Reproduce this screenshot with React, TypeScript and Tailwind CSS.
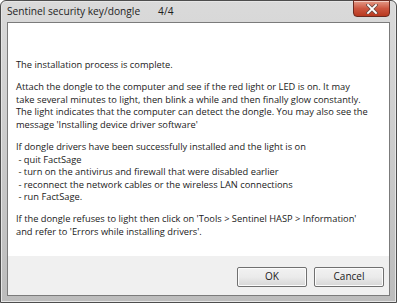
const font = { fontFamily: '"Open Sans", "Noto Sans", sans-serif' }

function CloseButton() {
  return (
    <div className="w-[37px] h-[17px] mt-[-1px] rounded-b-[4px] border border-[#6b2a20] bg-gradient-to-b from-[#e39a88] via-[#cc5640] to-[#b8391f] flex items-center justify-center shadow-[inset_0_1px_0_rgba(255,255,255,0.5)]">
      <svg width="12" height="10" viewBox="0 0 12 10">
        <path d="M2 1 L10 9 M10 1 L2 9" stroke="#6a4a44" strokeWidth="3.4" strokeLinecap="square" />
        <path d="M2 1 L10 9 M10 1 L2 9" stroke="#ffffff" strokeWidth="1.8" strokeLinecap="square" />
      </svg>
    </div>
  )
}

function Button({ label }: { label: string }) {
  return (
    <button className="w-[70px] h-[20px] rounded-[2px] border border-[#707070] bg-gradient-to-b from-[#f2f2f2] via-[#ebebeb] to-[#d6d6d6] text-[10px] text-[#1a1a1a] flex items-center justify-center shadow-[inset_0_0_0_1px_#fcfcfc]">
      {label}
    </button>
  )
}

export default function App() {
  return (
    <div
      style={font}
      className="w-[397px] h-[303px] rounded-t-[6px] border border-[#4d4d4d] bg-gradient-to-b from-[#dadada] via-[#cbcbcb] to-[#bcbcbc] flex flex-col px-[6px] pb-[6px] shadow-[inset_0_0_0_1px_#e6e6e6]"
    >
      {/* Title bar */}
      <div className="h-[21px] flex items-start justify-between">
        <div className="flex items-center h-[21px] text-[10.2px] text-[#1e1e1e] pt-[1px]">
          <span>Sentinel security key/dongle</span>
          <span className="ml-[18px]">4/4</span>
        </div>
        <CloseButton />
      </div>

      {/* Client area */}
      <div className="flex-1 border border-[#7b7b7b] bg-white flex flex-col">
        <div className="flex-1 pl-[8px] pr-[6px] pt-[36px] text-[9.3px] leading-[12.6px] text-[#1a1a1a]">
          <p>The installation process is complete.</p>
          <p className="mt-[9.5px]">
            Attach the dongle to the computer and see if the red light or LED is on. It may
            <br />
            take several minutes to light, then blink a while and then finally glow constantly.
            <br />
            The light indicates that the computer can detect the dongle. You may also see the
            <br />
            message 'Installing device driver software'
          </p>
          <p className="mt-[9.5px]">
            If dongle drivers have been successfully installed and the light is on
            <br />
            &nbsp;- quit FactSage
            <br />
            &nbsp;- turn on the antivirus and firewall that were disabled earlier
            <br />
            &nbsp;- reconnect the network cables or the wireless LAN connections
            <br />
            &nbsp;- run FactSage.
          </p>
          <p className="mt-[9.5px]">
            If the dongle refuses to light then click on 'Tools &gt; Sentinel HASP &gt; Information'
            <br />
            and refer to 'Errors while installing drivers'.
          </p>
        </div>
        <div className="h-[39px] bg-[#f0f0f0] flex items-center justify-end gap-[7px] pr-[5px] pt-[2px]">
          <Button label="OK" />
          <Button label="Cancel" />
        </div>
      </div>
    </div>
  )
}
